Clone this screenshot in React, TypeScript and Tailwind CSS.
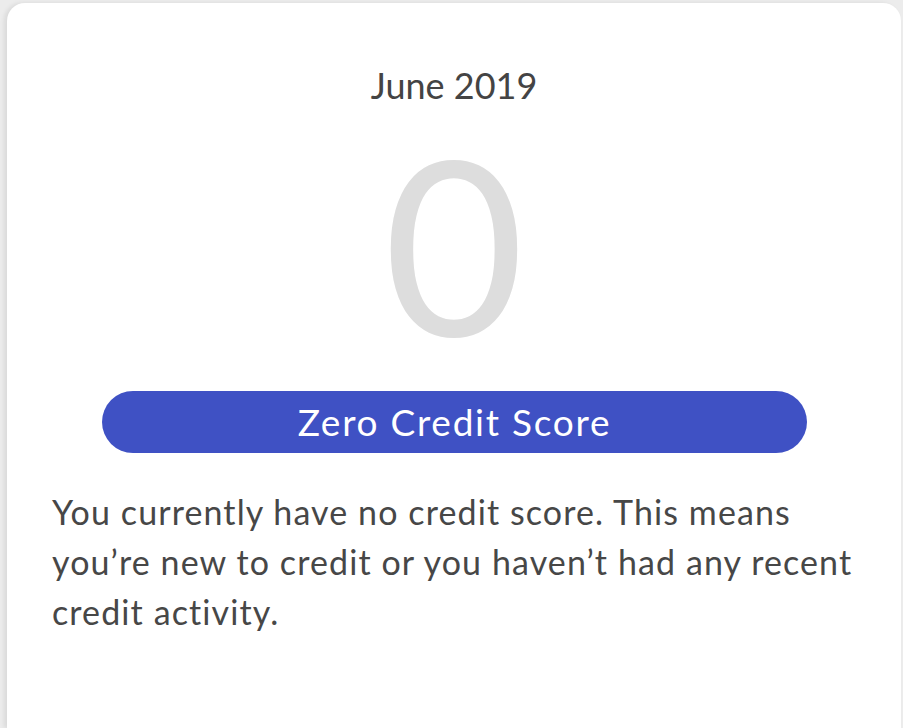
export default function App() {
  return (
    <div className="min-h-[728px] bg-[#ececec] pt-[3px] pl-[7px] pr-[2px]" style={{ fontFamily: "Lato, 'Open Sans', sans-serif" }}>
      <div className="bg-white rounded-t-[18px] min-h-[725px] shadow-[-3px_0_4px_rgba(0,0,0,0.08)] flex flex-col items-center pt-[62px] pl-[45px] pr-[28px]">
        <div className="text-[36px] leading-[40px] text-[#444444] mr-[17px]">June 2019</div>
        <div className="text-[243px] leading-[190px] text-[#dddddd] mt-[42px] mr-[17px]">0</div>
        <div className="w-[705px] h-[62px] rounded-full bg-[#3f51c4] text-white text-[37px] tracking-[1.75px] flex items-center justify-center mt-[54px] mr-[16px]">
          Zero Credit Score
        </div>
        <p className="self-stretch text-[34px] leading-[50px] tracking-[1.1px] text-[#474747] mt-[34px]">
          You currently have no credit score. This means you’re new to credit or you haven’t had any recent credit activity.
        </p>
      </div>
    </div>
  );
}
